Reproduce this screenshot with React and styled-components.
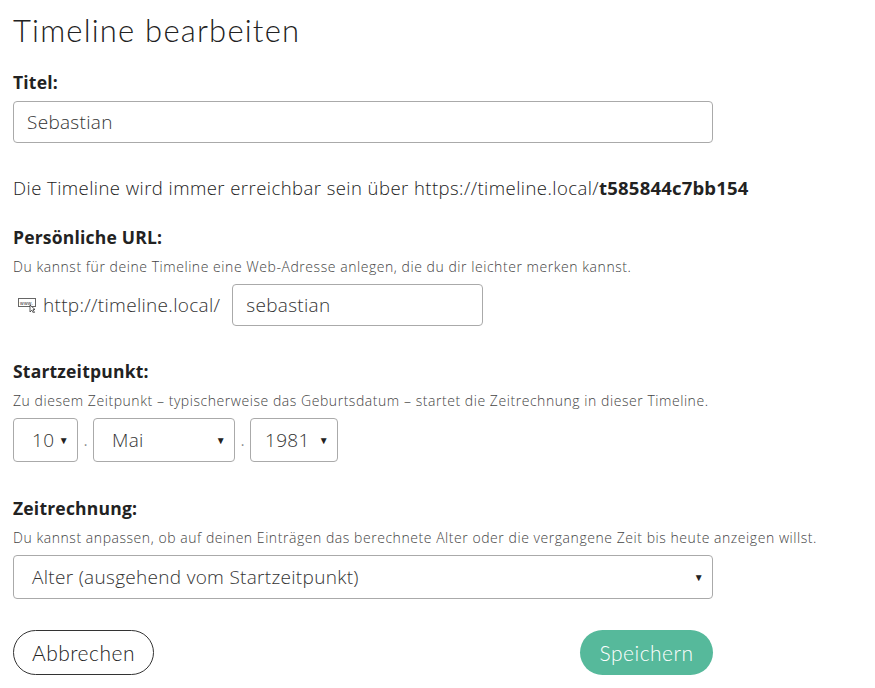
import React from "react";
import styled, { createGlobalStyle } from "styled-components";

const Global = createGlobalStyle`
  body { margin: 0; background: #fff; font-family: "Open Sans", sans-serif; color: #333; }
`;

const Page = styled.div`
  width: 700px;
  padding: 10px 0 0 13px;
`;
const Heading = styled.h1`
  font-family: "Lato", sans-serif;
  font-weight: 300;
  font-size: 31px;
  letter-spacing: 1.2px;
  color: #222;
  margin: 0 0 20px 0;
  line-height: 40px;
`;
const Label = styled.div`
  font-weight: 700;
  font-size: 17.5px;
  letter-spacing: 0.2px;
  color: #222;
  line-height: 24px;
  margin-top: ${(p) => p.$top || 0}px;
`;
const Help = styled.div`
  font-size: 14px;
  letter-spacing: 0.55px;
  font-weight: 300;
  color: #444;
  line-height: 20px;
  margin: 8px 0 7px;
  white-space: nowrap;
`;
const Input = styled.input`
  box-sizing: border-box;
  width: ${(p) => p.$w}px;
  height: 42px;
  border: 1px solid #aaa;
  border-radius: 4px;
  padding: 0 13px;
  font-family: "Open Sans", sans-serif;
  font-weight: 300;
  letter-spacing: 0.3px;
  font-size: 19px;
  color: #333;
  margin-top: ${(p) => p.$top || 0}px;
`;
const Info = styled.div`
  font-size: 18.5px;
  font-weight: 300;
  letter-spacing: 0.45px;
  color: #222;
  margin: 33px 0 25px;
  line-height: 24px;
  white-space: nowrap;
  b { color: #222; font-weight: 700; letter-spacing: 0.2px; }
`;
const Row = styled.div`
  display: flex;
  align-items: center;
`;
const UrlPrefix = styled.span`
  display: flex;
  align-items: center;
  gap: 5px;
  font-size: 19px;
  font-weight: 300;
  letter-spacing: 0.3px;
  color: #333;
  margin: 0 12px 0 5px;
`;
const Select = styled.div`
  box-sizing: border-box;
  width: ${(p) => p.$w}px;
  height: ${(p) => p.$h || 44}px;
  border: 1px solid #aaa;
  border-radius: 4px;
  display: flex;
  align-items: center;
  justify-content: space-between;
  padding: 0 8px 0 ${(p) => p.$pl || 18}px;
  font-size: 19px;
  font-weight: 300;
  letter-spacing: 0.3px;
  color: #333;
  &::after {
    content: "▼";
    font-size: 10px;
    color: #222;
  }
`;
const Dot = styled.span`
  width: 15px;
  text-align: center;
  color: #888;
  font-size: 14px;
  align-self: flex-end;
  padding-bottom: 12px;
`;
const Buttons = styled.div`
  display: flex;
  justify-content: space-between;
  width: 700px;
  margin-top: 31px;
`;
const Button = styled.button`
  height: 45px;
  padding: 0;
  border-radius: 23px;
  font-family: "Lato", sans-serif;
  font-weight: 300;
  letter-spacing: 0.5px;
  font-size: 21px;
  border: ${(p) => (p.$primary ? "none" : "1px solid #333")};
  background: ${(p) => (p.$primary ? "#56b99b" : "#fff")};
  color: ${(p) => (p.$primary ? "#fff" : "#222")};
  width: ${(p) => p.$w}px;
`;

const WwwIcon = () => (
  <svg width="20" height="16" viewBox="0 0 20 16">
    <rect x="0.5" y="1.5" width="17" height="8" fill="#fff" stroke="#666" />
    <text x="2" y="8" fontSize="5" fontFamily="Liberation Sans" fill="#333">www.</text>
    <path d="M12 8 L12 15 L13.8 13.2 L15.5 16 L16.5 15.4 L15 12.7 L17 12.5 Z" fill="#fff" stroke="#333" strokeWidth="0.8" />
  </svg>
);

export default function App() {
  return (
    <Page>
      <Global />
      <Heading>Timeline bearbeiten</Heading>
      <Label>Titel:</Label>
      <Input $w={700} $top={7} defaultValue="Sebastian" />
      <Info>
        Die Timeline wird immer erreichbar sein über https://timeline.local/<b>t585844c7bb154</b>
      </Info>
      <Label>Persönliche URL:</Label>
      <Help>Du kannst für deine Timeline eine Web-Adresse anlegen, die du dir leichter merken kannst.</Help>
      <Row>
        <UrlPrefix><WwwIcon />http://timeline.local/</UrlPrefix>
        <Input $w={251} defaultValue="sebastian" />
      </Row>
      <Label $top={33}>Startzeitpunkt:</Label>
      <Help>Zu diesem Zeitpunkt – typischerweise das Geburtsdatum – startet die Zeitrechnung in dieser Timeline.</Help>
      <Row>
        <Select $w={65}>10</Select>
        <Dot>.</Dot>
        <Select $w={142}>Mai</Select>
        <Dot>.</Dot>
        <Select $w={88} $pl={14}>1981</Select>
      </Row>
      <Label $top={34}>Zeitrechnung:</Label>
      <Help>Du kannst anpassen, ob auf deinen Einträgen das berechnete Alter oder die vergangene Zeit bis heute anzeigen willst.</Help>
      <Select $w={700}>Alter (ausgehend vom Startzeitpunkt)</Select>
      <Buttons>
        <Button $w={141}>Abbrechen</Button>
        <Button $primary $w={133}>Speichern</Button>
      </Buttons>
    </Page>
  );
}
